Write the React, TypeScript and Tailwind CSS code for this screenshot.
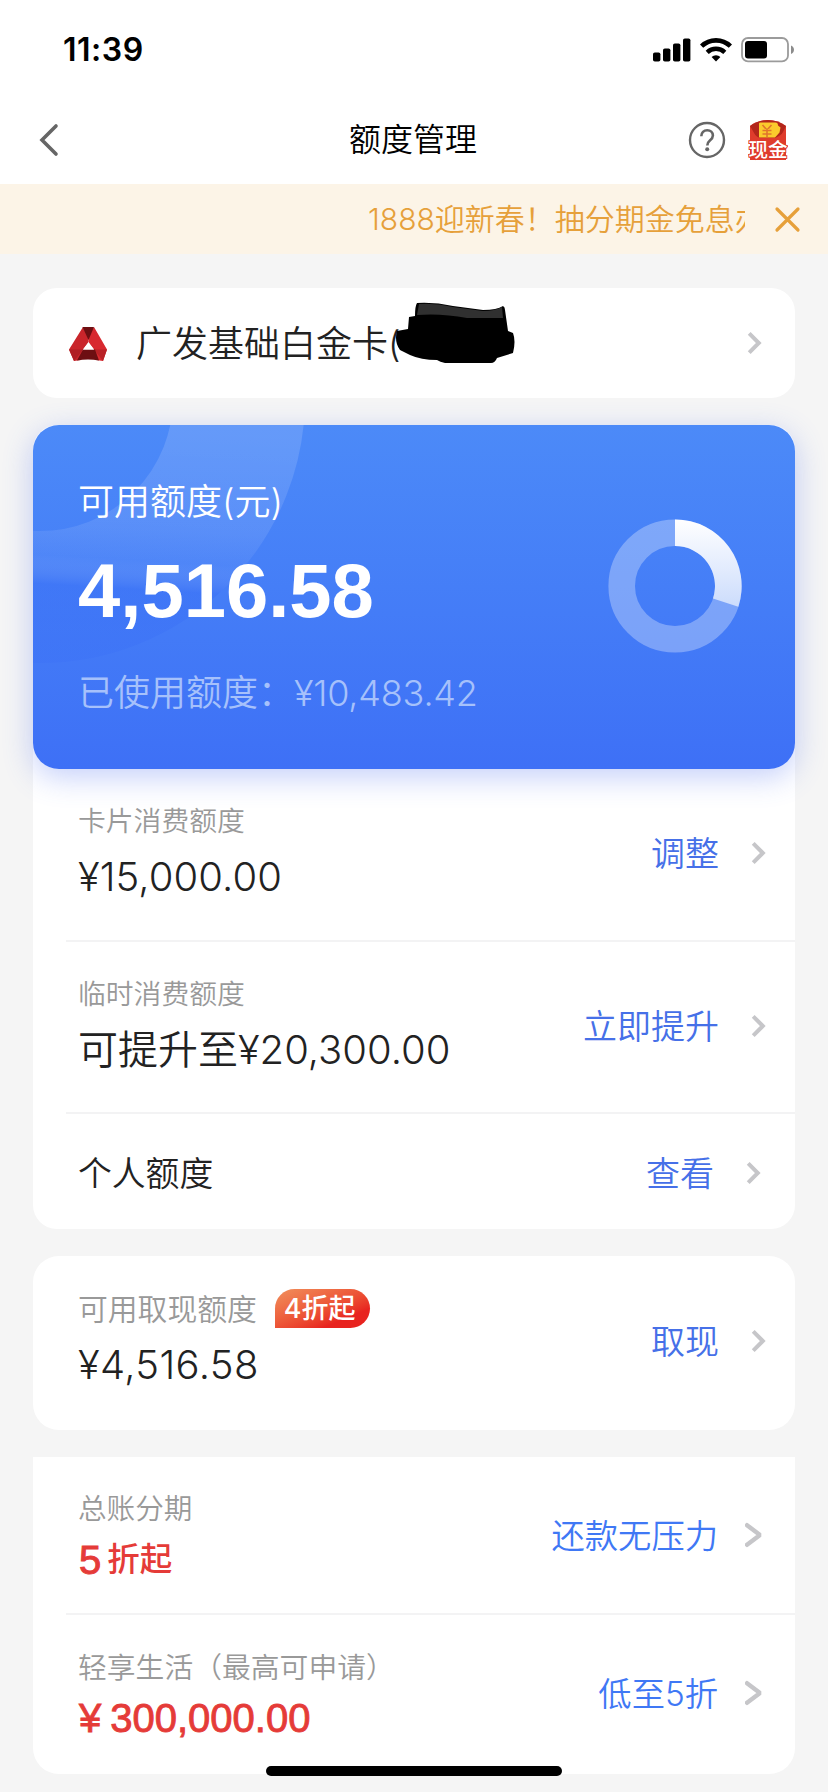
import type { ReactNode } from 'react';

function Chevron({ size = 'md' }: { size?: 'md' | 'lg' }) {
  const lg = size === 'lg';
  return (
    <svg width="18" height="26" viewBox="0 0 18 26" fill="none" stroke="#c6c6c9" strokeWidth={lg ? 4.4 : 4}>
      {lg ? (
        <path d="M2 3.2 15 13 2 22.8" strokeLinecap="round" strokeLinejoin="bevel" />
      ) : (
        <path d="M3.2 3.4 12.8 13 3.2 22.6" />
      )}
    </svg>
  );
}

function StatusBar() {
  return (
    <div className="flex h-24 items-center justify-between pl-[63px] pr-[33px] pt-[3px]">
      <span className="pt-px text-[32px] font-semibold leading-none tracking-[0.5px] text-black">11:39</span>
      <div className="flex items-center">
        <svg width="38" height="24" viewBox="0 0 38 24" fill="#000">
          <rect x="0" y="14.5" width="7.4" height="9" rx="1.8" />
          <rect x="10" y="10.5" width="7.4" height="13" rx="1.8" />
          <rect x="20" y="5.5" width="7.4" height="18" rx="1.8" />
          <rect x="30" y="0.5" width="7.4" height="23" rx="1.8" />
        </svg>
        <svg className="ml-[9px]" width="32" height="24" viewBox="0 0 32 24" fill="none" stroke="#000">
          <path d="M1.6 8.2a20.6 20.6 0 0 1 28.8 0" strokeWidth="4.6" />
          <path d="M7.2 14.4a12.6 12.6 0 0 1 17.6 0" strokeWidth="4.4" />
          <path d="M16 23.6 11.6 19a6.3 6.3 0 0 1 8.8 0z" fill="#000" stroke="none" />
        </svg>
        <svg className="ml-[9px]" width="54" height="26" viewBox="0 0 54 26">
          <rect x="1" y="1" width="46" height="23.4" rx="6" fill="none" stroke="#9b9b9b" strokeWidth="1.8" />
          <rect x="4" y="4" width="22" height="17.4" rx="3" fill="#000" />
          <path d="M50 8.6c4 1.6 4 6.800 0 8.400z" fill="#8c8c8c" />
        </svg>
      </div>
    </div>
  );
}

function CashIcon() {
  return (
    <svg width="40" height="42" viewBox="0 0 40 42">
      <path d="M2 7Q10 1 20 1t18 6v34H2z" fill="#df3c2c" />
      <path d="M2 7Q10 1 20 1t18 6l-6 12H9z" fill="#b3261b" />
      <path d="M11 4.500q0-1 1.500-1h15q2.500 0 2.500 3l2.500 2-1 5-4.500 5H11z" fill="#fbca2c" />
      <path d="m14.500 6 4.500 5 4.500-5M19 11v7M14.500 11.500h9M14.500 15h9" fill="none" stroke="#e0752c" strokeWidth="1.6" />
      <path d="M2 9q4 8 10 10h15q8-3 11-10v12H2z" fill="#df3c2c" />
      <path d="M12 10h15v8H12z" fill="#fbca2c" />
      <path d="M19 10v8M14.500 11.500h9M14.500 15h9" fill="none" stroke="#e0752c" strokeWidth="1.6" />
      <text
        x="20"
        y="37.500"
        textAnchor="middle"
        fontSize="19.500"
        fontWeight="500"
        fill="#fff"
        stroke="#df3c2c"
        strokeWidth="2"
        paintOrder="stroke"
      >
        现金
      </text>
    </svg>
  );
}

function NavBar() {
  return (
    <div className="grid h-[88px] grid-cols-[1fr_auto_1fr] items-center pl-[38px] pr-10">
      <svg width="22" height="34" viewBox="0 0 22 34" fill="none" stroke="#666" strokeWidth="3.6" strokeLinecap="round">
        <path d="M18 3 4 17l14 14" />
      </svg>
      <h1 className="text-[32px] leading-none text-black">额度管理</h1>
      <div className="flex items-center justify-end gap-[22px]">
        <svg width="38" height="38" viewBox="0 0 38 38" fill="none" stroke="#666">
          <circle cx="19" cy="19" r="17" strokeWidth="2.4" />
          <path
            d="M13.300 15.200c0-3.600 2.500-5.900 5.900-5.900 3.300 0 5.700 2.100 5.700 5.200 0 2.400-1.300 3.600-3 5-1.700 1.400-2.600 2.300-2.600 4.900"
            strokeWidth="2.6"
          />
          <circle cx="19.2" cy="28.3" r="2" fill="#666" stroke="none" />
        </svg>
        <CashIcon />
      </div>
    </div>
  );
}

function NoticeBar() {
  return (
    <div className="flex h-[70px] items-center bg-[#fcf4e7] pl-[368px] text-[#e6a03a]">
      <p className="w-[377px] overflow-hidden whitespace-nowrap text-[30px] leading-10">1888迎新春！抽分期金免息办</p>
      <svg
        className="ml-[28px]"
        width="28"
        height="28"
        viewBox="0 0 28 28"
        stroke="currentColor"
        strokeWidth="3.2"
        strokeLinecap="round"
      >
        <path d="m4 4 21 21M25 4 4 25" />
      </svg>
    </div>
  );
}

function CardPicker() {
  return (
    <div className="relative flex h-[110px] items-center rounded-3xl bg-white pl-[35px] pr-[31px]">
      <svg className="mt-0.5" width="40" height="34" viewBox="0 0 40 34">
        <path d="M15 0 1 22.500 6 34l7-1 2-10.500 5.500-7L20 9z" fill="#c9252b" />
        <path d="M26 0 39 22.500 35 34l-7-1-2-10.500-5.500-7L20 9z" fill="#d8292f" />
        <path d="M14.500 0h11.500L20.500 13z" fill="#6d0f12" />
        <path d="M1 22.500 15 22.500 6 34z" fill="#b01f24" />
        <path d="M39 22.500 26 22.500 35 34z" fill="#b92227" />
        <path d="M15 22.500h12l4 11q-11-2-22 0z" fill="#6d0f12" />
        <path d="M20.500 15 26 22.500H15z" fill="#fff" />
      </svg>
      <span className="ml-7 pt-0.5 text-4xl leading-none text-[#222]">广发基础白金卡(</span>
      <svg className="absolute left-[358px] top-3" width="126" height="66" viewBox="0 0 126 66">
        <path
          d="M26 3Q44 2 62 6l30 4q14 0 20-4 2 1 2 4l3 21 5 2q3 8 0 20l-16 5q-2 5-6 5H54q-5-1-8-3-16 0-27-5L9 50q-6-8-3-19l11-2 1-12 6-1q0-10 2-13z"
          fill="#000"
        />
        <path d="M28 4q17-1 34 3l30 4q12 0 19-4l1 11H76q-26-5-50-3z" fill="#303030" />
      </svg>
      <div className="ml-auto">
        <Chevron />
      </div>
    </div>
  );
}

function UsageRing() {
  return (
    <svg width="134" height="134" viewBox="0 0 134 134">
      <defs>
        <linearGradient id="ring" x1="0" y1="0" x2="0" y2="1">
          <stop offset="0" stopColor="#fff" />
          <stop offset="1" stopColor="#ccdcfc" />
        </linearGradient>
      </defs>
      <circle cx="67" cy="67" r="53.3" fill="none" stroke="#fff" strokeOpacity="0.3" strokeWidth="26.6" />
      <path d="M67 .4A66.600 66.600 0 0 1 130.300 87.800L105 79.500A40 40 0 0 0 67 27z" fill="url(#ring)" />
    </svg>
  );
}

function AvailableCard() {
  return (
    <div className="relative flex h-[344px] justify-between overflow-hidden rounded-[26px] bg-linear-to-b from-[#4c8af8] to-[#3e70f6] pl-[45px] pr-[53px]">
      <svg className="absolute left-0 top-0" width="300" height="260" viewBox="0 0 300 260">
        <defs>
          <linearGradient id="arc" gradientUnits="userSpaceOnUse" x1="14" y1="0" x2="0" y2="240">
            <stop offset="0" stopColor="#fff" stopOpacity="0.14" />
            <stop offset="0.4" stopColor="#fff" stopOpacity="0.1" />
            <stop offset="0.54" stopColor="#a0bcfb" stopOpacity="0.1" />
            <stop offset="0.66" stopColor="#3a6ff6" stopOpacity="0.45" />
            <stop offset="1" stopColor="#3a6ff6" stopOpacity="0.3" />
          </linearGradient>
        </defs>
        <circle cx="7" cy="-27" r="199" fill="none" stroke="url(#arc)" strokeWidth="132" />
      </svg>
      <div className="relative flex flex-col text-white">
        <p className="mt-[55px] text-4xl leading-[44px]">可用额度(元)</p>
        <p className="mt-[27px] font-['Liberation_Sans'] text-[76px] font-bold leading-20">4,516.58</p>
        <p className="mt-[40px] text-4xl leading-[44px] text-[#a6c1fb]">
          已使用额度：<span className="tracking-[-0.2px]">¥10,483.42</span>
        </p>
      </div>
      <div className="relative mt-[94px]">
        <UsageRing />
      </div>
    </div>
  );
}

function Row({
  className,
  label,
  action,
  actionClass,
  chevron,
  children,
}: {
  className: string;
  label?: ReactNode;
  action: string;
  actionClass: string;
  chevron?: 'md' | 'lg';
  children: ReactNode;
}) {
  return (
    <div className={`flex justify-between pl-[45px] ${className}`}>
      <div>
        {label}
        {children}
      </div>
      <div className={`flex h-10 items-center ${actionClass}`}>
        <span className="pt-0.5 leading-10">{action}</span>
        <Chevron size={chevron} />
      </div>
    </div>
  );
}

const divider = <div className="ml-[33px] h-0.5 bg-[#f3f3f4]" />;

export default function App() {
  return (
    <div className="relative h-[1792px] w-[828px] overflow-hidden bg-[#f5f5f5] font-['Inter','Noto_Sans_CJK_SC',sans-serif] font-[350]">
      <header className="h-[184px] bg-white">
        <StatusBar />
        <NavBar />
      </header>
      <NoticeBar />

      <main className="px-[33px] pt-[34px]">
        <CardPicker />

        <section className="mt-[27px] h-[804px] rounded-3xl bg-white">
          <div className="rounded-[26px] shadow-[0_8px_30px_rgba(72,105,240,0.32)]">
            <AvailableCard />
          </div>
          <Row
            className="h-[171px] pt-[34px]"
            label={<p className="text-[27.8px] leading-9 text-[#999]">卡片消费额度</p>}
            action="调整"
            actionClass="mt-[30px] gap-[31px] pr-[27px] text-[34px] text-[#4670e8]"
          >
            <p className="mt-[14px] text-[40px] leading-[48px] tracking-[0.1px] text-[#222]">¥15,000.00</p>
          </Row>
          {divider}
          <Row
            className="h-[170px] pt-[34px]"
            label={<p className="text-[27.8px] leading-9 text-[#999]">临时消费额度</p>}
            action="立即提升"
            actionClass="mt-[30px] gap-[31px] pr-[27px] text-[34px] text-[#4670e8]"
          >
            <p className="mt-[14px] text-[40px] leading-[48px] text-[#222]">可提升至¥20,300.00</p>
          </Row>
          {divider}
          <Row className="pt-[39px]" action="查看" actionClass="gap-[31px] pr-[32px] text-[34px] text-[#4670e8]">
            <p className="pt-px text-[33.8px] leading-10 text-[#222]">个人额度</p>
          </Row>
        </section>

        <section className="mt-[27px] h-[174px] rounded-[26px] bg-white">
          <Row
            className="pt-8"
            label={
              <div className="flex items-center">
                <p className="pt-px text-[29.8px] leading-10 text-[#999]">可用取现额度</p>
                <span className="ml-[18px] h-[39px] w-[95px] rounded-[20px] rounded-bl-none bg-linear-to-br from-[#f08f5c] to-[#e8231f] to-75% pl-[9px] text-[27px] font-medium leading-[39px] text-white">
                  4折起
                </span>
              </div>
            }
            action="取现"
            actionClass="mt-[33px] gap-[31px] pr-[27px] text-[34px] text-[#4670e8]"
          >
            <p className="mt-3 text-[40px] leading-[48px] tracking-[0.4px] text-[#222]">¥4,516.58</p>
          </Row>
        </section>

        <section className="mt-[27px] h-[317px] rounded-b-[26px] bg-white">
          <Row
            className="h-[156px] pt-8"
            label={<p className="text-[28.6px] leading-10 text-[#999]">总账分期</p>}
            action="还款无压力"
            actionClass="mt-[26px] gap-[27px] pr-[32px] text-[33.3px] text-[#3f78f5]"
            chevron="lg"
          >
            <p className="mt-[9px] flex gap-1.5 pl-px leading-[44px] text-[#e53b38]">
              <span className="font-['Liberation_Sans'] text-[40px] [-webkit-text-stroke:1px]">5</span>
              <span className="text-[32.5px] font-medium">折起</span>
            </p>
          </Row>
          {divider}
          <Row
            className="pt-[33px]"
            label={<p className="text-[28.8px] leading-10 text-[#999]">轻享生活（最高可申请）</p>}
            action="低至5折"
            actionClass="mt-[25px] gap-[27px] pr-[32px] text-[33.3px] text-[#3f78f5]"
            chevron="lg"
          >
            <p className="mt-1.5 pl-px font-['Liberation_Sans'] text-[40px] leading-[48px] text-[#e53b38] [-webkit-text-stroke:0.9px]">
              ¥<span className="ml-[9px]">300,000.00</span>
            </p>
          </Row>
        </section>
      </main>

      <div className="absolute bottom-4 left-[266px] h-2.5 w-[296px] rounded-full bg-black" />
    </div>
  );
}
